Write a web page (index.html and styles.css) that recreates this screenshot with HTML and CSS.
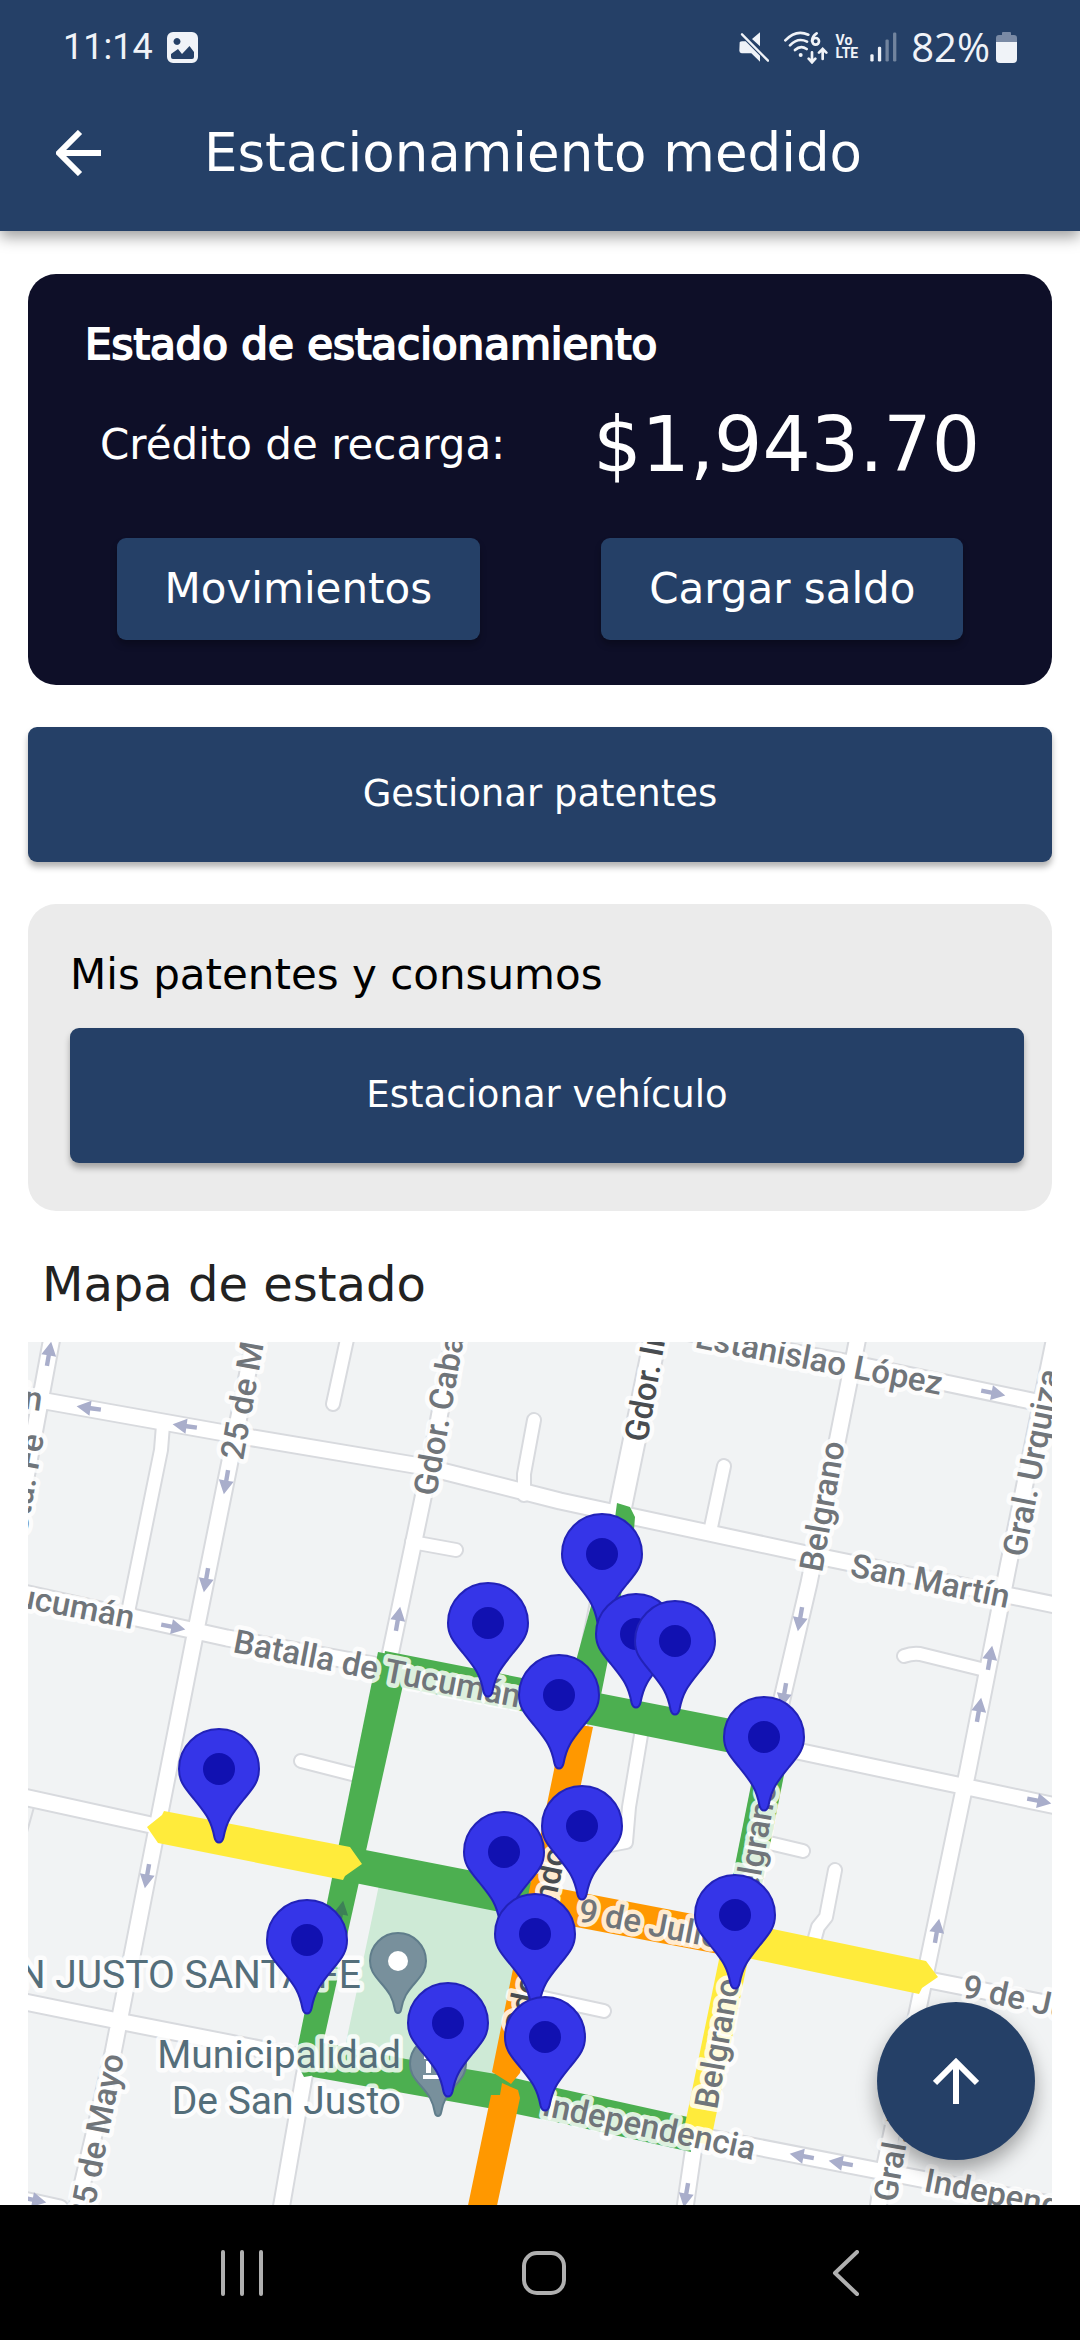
FILE: index.html
```html
<!DOCTYPE html>
<html lang="es">
<head>
<meta charset="utf-8">
<meta name="viewport" content="width=device-width, initial-scale=1">
<title>Estacionamiento medido</title>
<link rel="stylesheet" href="styles.css">
</head>
<body>
<header class="header">
  <div class="status">
    <span class="status-clock">11:14</span>
    <svg class="icon-photo" viewBox="0 0 31 31" width="31" height="31" aria-hidden="true"><path fill="#f0f3f8" fill-rule="evenodd" d="M6 0h19a6 6 0 0 1 6 6v19a6 6 0 0 1-6 6H6a6 6 0 0 1-6-6V6a6 6 0 0 1 6-6zM10 6a3.500 3.500 0 1 0 .01 0zM4 22v3q0 2 2 2h19q2 0 2-2v-5l-4.500-6-7.500 8-4-5z"/></svg>
    <div class="status-right">
      <svg class="icon-mute" viewBox="95 65 90 90" width="30" height="30" aria-hidden="true"><path fill="#f0f3f8" d="M134 86l24-20v42zM97 96q2-3 8-3h10l43 43v18l-26-25h-29q-7-1-7-8z"/><path d="M104 72l78 79" stroke="#f0f3f8" stroke-width="7" stroke-linecap="round"/></svg>
      <svg class="icon-wifi" viewBox="230 62 132 99" width="44" height="33" aria-hidden="true"><g fill="none" stroke="#f0f3f8" stroke-width="8" stroke-linecap="round"><path d="M234 90Q266 56 303 73M248 105Q272 80 299 94M263 119Q280 103 298 116"/><path d="M328 69q-14 9-14 23"/><circle cx="325" cy="93" r="10"/><path d="M314 126v28m-10-9l10 11 10-11M346 146v-28m-11 9l11-11 11 11"/></g><circle cx="280" cy="134" r="6" fill="#f0f3f8"/></svg>
      <span class="volte"><span>Vo</span><span>LTE</span></span>
      <svg class="icon-signal" viewBox="495 65 82 90" width="27" height="30" aria-hidden="true"><g fill="#f0f3f8"><rect x="496" y="132" width="10" height="22" rx="4"/><rect x="519" y="109" width="10" height="45" rx="4"/><g opacity=".38"><rect x="542" y="87" width="10" height="67" rx="4"/><rect x="565" y="66" width="10" height="88" rx="4"/></g></g></svg>
      <span class="status-charge">82%</span>
      <svg class="icon-battery" viewBox="0 0 21 32" width="21" height="32" aria-hidden="true"><path fill="#7a8aa5" d="M6 4V2q0-1 1-1h7q1 0 1 1v2h3q3 0 3 3v5H0V7q0-3 3-3z"/><path fill="#f0f3f8" d="M0 11h21v17q0 4-4 4H4q-4 0-4-4z"/></svg>
    </div>
  </div>
  <div class="toolbar">
    <button class="back" type="button" aria-label="Volver"><svg viewBox="0 0 46 46" width="46" height="46"><path d="M45 23H5M24 2L3 23l21 21" fill="none" stroke="#fff" stroke-width="6"/></svg></button>
    <h1 class="title">Estacionamiento medido</h1>
  </div>
</header>

<main class="main">
  <section class="balance">
    <h2 class="balance-title">Estado de estacionamiento</h2>
    <div class="balance-row">
      <span class="balance-label">Crédito de recarga:</span>
      <span class="balance-amount">$1,943.70</span>
    </div>
    <div class="balance-actions">
      <button class="btn-small" type="button">Movimientos</button>
      <button class="btn-small" type="button">Cargar saldo</button>
    </div>
  </section>

  <button class="btn-large" type="button">Gestionar patentes</button>

  <section class="panel">
    <h2 class="panel-title">Mis patentes y consumos</h2>
    <button class="btn-large" type="button">Estacionar vehículo</button>
  </section>

  <section class="map-section">
    <h2 class="map-title">Mapa de estado</h2>
    <div class="map">
      <svg class="map-canvas" viewBox="28 1342 1024 863" preserveAspectRatio="xMidYMin slice" role="img" aria-label="Mapa de estado">
        <defs>
          <path id="arrow" d="M0-12.500L7.500 1.500H2.200V12h-4.400V1.500h-5.300z"/>
          <g id="pin">
            <path d="M0 73.500c-2.500 0-3.800-2-4.500-5C-8 50-14 44-25 30-36 17-40 11-40 0a40 40 0 0 1 80 0c0 11-4 17-15 30C14 44 8 50 4.500 68.500c-.7 3-2 5-4.500 5z" fill="#3535e8" stroke="#2222b8" stroke-width="2"/>
            <circle r="16" fill="#1111b1"/>
          </g>
          <path id="poi" d="M0 52c-1.500 0-2.500-1-3-3C-5 37-9 31-17 22-25 13-28 8-28 0a28 28 0 0 1 56 0c0 8-3 13-11 22C9 31 5 37 3 49c-.5 2-1.500 3-3 3z" fill="#78909c" stroke="#607d8b" stroke-width="2"/>
          <g id="side-streets">
            <path d="M163 1425L161 1450 126 1622M349 1330L333 1404M534 1420L524 1474V1495M724 1466L710 1532M456 1550L412 1542M904 1656Q912 1653 920 1654L985 1670M301 1761L360 1776M641 1735L629 1807 626 1842 605 1846M803 1851L765 1842M835 1870L826 1917 818 1927 813 1945M604 2011L535 1996"/>
          </g>
          <g id="streets">
            <path d="M53 1332L40 1402 20 1510M34 1399L247 1437 426 1467 560 1501 802 1553 1070 1608M256 1332L196 1630 158 1823 113 2053 74 2220M455 1332L433 1450 388 1665 304 2077 280 2215M10 1590L227 1638 395 1669 802 1752 967 1787 1070 1809M10 1794L151 1825 400 1872 745 1941 929 1980 1070 2008M859 1332L809 1583 781 1703 693 2153 684 2215M1056 1332L1008 1567 968 1770 929 1957 884 2170 877 2215M680 1331L850 1363 1060 1407M10 1999L123 2022 306 2058 690 2134 1070 2208M10 2197L60 2208"/>
          </g>
        </defs>

        <rect x="0" y="1300" width="1100" height="950" fill="#f1f3f4"/>
        <path d="M380 1880L545 1915 506 2085 344 2052z" fill="#ceead6"/>

        <g fill="none" stroke="#d8dade" stroke-linecap="round" stroke-linejoin="round">
          <use href="#side-streets" stroke-width="16"/>
          <use href="#streets" stroke-width="19"/>
          <path d="M657 1330L622 1500 578 1720" stroke-width="25"/>
          <path d="M34 1807L27 1832" stroke-width="2"/>
        </g>
        <g fill="none" stroke="#fff" stroke-linecap="round" stroke-linejoin="round">
          <use href="#side-streets" stroke-width="12"/>
          <use href="#streets" stroke-width="15"/>
          <path d="M657 1330L622 1500 578 1720" stroke-width="21"/>
        </g>

        <g fill="#a9aecb">
          <use href="#arrow" transform="translate(49 1354) rotate(10)"/>
          <use href="#arrow" transform="translate(89 1408) rotate(-82)"/>
          <use href="#arrow" transform="translate(185 1426) rotate(-82)"/>
          <use href="#arrow" transform="translate(226 1482) rotate(190)"/>
          <use href="#arrow" transform="translate(206 1580) rotate(190)"/>
          <use href="#arrow" transform="translate(398 1619) rotate(10)"/>
          <use href="#arrow" transform="translate(173 1627) rotate(101)"/>
          <use href="#arrow" transform="translate(993 1393) rotate(101)"/>
          <use href="#arrow" transform="translate(800 1619) rotate(190)"/>
          <use href="#arrow" transform="translate(784 1695) rotate(190)"/>
          <use href="#arrow" transform="translate(990 1658) rotate(10)"/>
          <use href="#arrow" transform="translate(979 1710) rotate(10)"/>
          <use href="#arrow" transform="translate(1039 1801) rotate(101)"/>
          <use href="#arrow" transform="translate(937 1931) rotate(10)"/>
          <use href="#arrow" transform="translate(802 2156) rotate(-80)"/>
          <use href="#arrow" transform="translate(841 2163) rotate(-80)"/>
          <use href="#arrow" transform="translate(686 2195) rotate(190)"/>
          <use href="#arrow" transform="translate(147 1876) rotate(190)"/>
          <use href="#arrow" transform="translate(34 2200) rotate(101)"/>
        </g>

        <g fill="#4caf50">
          <path d="M617 1503l13 4 5 10-1 13-34 170-32-10 47-172z"/>
          <path d="M385 1651L726 1718 770 1727 766 1760 726 1752 380 1683z"/>
          <path d="M378 1652L409 1658 316 2075 304 2077 295 2060z"/>
          <path d="M350 1847L545 1885 545 1921 350 1882z"/>
          <path d="M760 1740H791L753 1930H722z"/>
          <path d="M320 2042L406 2059 502 2075 557 2088 688 2117 691 2152 560 2123 488 2108 313 2077 298 2058z"/>
        </g>
        <use href="#arrow" transform="translate(341 1913) rotate(10)" fill="#3d8057"/>
        <g fill="#ff9800">
          <path d="M562 1722L593 1727 584 1770 520 2073 511 2084 492 2072 506 2003 554 1770z"/>
          <path d="M502 2083L518 2090 520 2098 495 2215H466L491 2095 500 2095z"/>
          <path d="M540 1885L562 1889 745 1924 745 1959 576 1927 540 1920z"/>
        </g>
        <g fill="#ffeb3b">
          <path d="M147 1827L162 1815 164 1811 350 1847 362 1864 345 1876 343 1880 158 1843z"/>
          <path d="M730 1920L926 1961 938 1977 922 1988 919 1994 728 1954z"/>
          <path d="M722 1945H751L710 2145 682 2139z"/>
        </g>

        <use href="#poi" x="398" y="1961"/>
        <circle cx="398" cy="1961" r="10" fill="#fff"/>
        <use href="#poi" x="438" y="2064"/>
        <path d="M438 2048l14 7v4h-28v-4zM426 2061h5v12h-5zM436 2061h5v12h-5zM446 2061h5v12h-5zM423 2075h30v4h-30z" fill="#fff"/>

        <g class="street-name">
          <text transform="translate(849 1576) rotate(11.500)">San Martín</text>
          <text text-anchor="end" transform="translate(940 1395) rotate(11)">Estanislao López</text>
          <text transform="translate(232 1652) rotate(11)">Batalla de Tucumán</text>
          <text text-anchor="end" transform="translate(132 1629) rotate(11)">Tucumán</text>
          <text transform="translate(243 1461) rotate(-80)">25 de Mayo</text>
          <text transform="translate(436 1497) rotate(-80)">Gdor. Caballero</text>
          <text transform="translate(822 1573) rotate(-80)">Belgrano</text>
          <text transform="translate(1025 1558) rotate(-79)">Gral. Urquiza</text>
          <text text-anchor="end" transform="translate(44 1436) rotate(-80)">Sta. Fe</text>
          <text text-anchor="end" transform="translate(41 1411) rotate(8)">Martín</text>
          <text transform="translate(577 1921) rotate(11)">9 de Julio</text>
          <text transform="translate(961 1997) rotate(12)">9 de Julio</text>
          <text transform="translate(717 2110) rotate(-80)">Belgrano</text>
          <text transform="translate(754 1915) rotate(-80)">Belgrano</text>
          <text transform="translate(896 2203) rotate(-80)">Gral. Urquiza</text>
          <text transform="translate(541 2115) rotate(12)">Independencia</text>
          <text transform="translate(923 2191) rotate(11)">Independencia</text>
          <text text-anchor="end" transform="translate(124 2056) rotate(-79)">25 de Mayo</text>
          <text class="avenue" transform="translate(647 1443) rotate(-80)">Gdor. Iriondo</text>
          <text class="avenue" transform="translate(527 2036) rotate(-78)">Gdor. Iriondo</text>
        </g>
        <g class="place-name" text-anchor="end">
          <text x="361" y="1988">SAN JUSTO SANTA FE</text>
          <text x="401" y="2068">Municipalidad</text>
          <text x="401" y="2114">De San Justo</text>
        </g>

        <use href="#pin" x="602" y="1554"/>
        <use href="#pin" x="488" y="1623"/>
        <use href="#pin" x="636" y="1634"/>
        <use href="#pin" x="675" y="1641"/>
        <use href="#pin" x="559" y="1695"/>
        <use href="#pin" x="764" y="1737"/>
        <use href="#pin" x="219" y="1769"/>
        <use href="#pin" x="582" y="1826"/>
        <use href="#pin" x="504" y="1852"/>
        <use href="#pin" x="735" y="1915"/>
        <use href="#pin" x="535" y="1934"/>
        <use href="#pin" x="307" y="1940"/>
        <use href="#pin" x="448" y="2023"/>
        <use href="#pin" x="545" y="2037"/>
      </svg>
      <button class="fab" type="button" aria-label="Subir"><svg viewBox="0 0 46 46" width="46" height="46"><path d="M23 46V5M2 25L23 4l21 21" fill="none" stroke="#fff" stroke-width="6"/></svg></button>
    </div>
  </section>
</main>

<nav class="nav">
  <button class="nav-btn" type="button" aria-label="Recientes"><svg viewBox="0 0 44 46" width="44" height="46"><path d="M3 2v42M22 2v42M41 2v42" stroke="#b0b0b0" stroke-width="4" stroke-linecap="round"/></svg></button>
  <button class="nav-btn" type="button" aria-label="Inicio"><svg viewBox="0 0 46 46" width="46" height="46"><rect x="3" y="3" width="40" height="40" rx="13" fill="none" stroke="#b0b0b0" stroke-width="4"/></svg></button>
  <button class="nav-btn" type="button" aria-label="Atrás"><svg viewBox="0 0 30 46" width="30" height="46"><path d="M26 2L4 23l22 21" fill="none" stroke="#b0b0b0" stroke-width="4" stroke-linecap="round" stroke-linejoin="round"/></svg></button>
</nav>
</body>
</html>
```
FILE: styles.css
```css
* {
  box-sizing: border-box;
}

body {
  margin: 0;
  min-height: 100vh;
  display: flex;
  flex-direction: column;
  background: #fff;
  font-family: "DejaVu Sans", sans-serif;
}

h1,
h2 {
  margin: 0;
  font-weight: 400;
}

button {
  margin: 0;
  padding: 0;
  border: 0;
  font-family: inherit;
  color: #fff;
  cursor: pointer;
}

svg {
  display: block;
  flex: none;
}

.header {
  position: relative;
  padding-bottom: 19px;
  background: #254067;
  color: #fff;
  box-shadow: 0 6px 14px rgba(0, 0, 0, 0.38);
}

.status {
  display: flex;
  align-items: center;
  height: 94px;
  padding: 0 63px;
  color: #f0f3f8;
  font-family: Roboto, sans-serif;
}

.status-clock {
  font-size: 36px;
  line-height: 48px;
}

.status-charge {
  font-family: "Open Sans", sans-serif;
  font-size: 40px;
  line-height: 48px;
}

.icon-photo {
  margin-left: 14px;
}

.status-right {
  display: flex;
  align-items: center;
  margin-left: auto;
}

.icon-wifi {
  margin-left: 15px;
}

.volte {
  display: flex;
  flex-direction: column;
  margin-left: 8px;
  font-size: 14px;
  font-weight: 700;
  line-height: 13px;
}

.icon-signal {
  margin: 0 14px 0 12px;
}

.icon-battery {
  margin-left: 6px;
}

.toolbar {
  display: flex;
  align-items: center;
  height: 118px;
  padding-left: 56px;
}

.back {
  background: none;
}

.title {
  margin-left: 102px;
  font-size: 53px;
  line-height: 64px;
}

.main {
  flex: 1;
  display: flex;
  flex-direction: column;
  gap: 42px;
  padding: 43px 28px 0;
}

.balance {
  padding: 46px 28px 45px;
  border-radius: 28px;
  background: #0e0f28;
  color: #fff;
}

.balance-title {
  padding-left: 29px;
  font-size: 42px;
  line-height: 50px;
  -webkit-text-stroke: 2px #fff;
}

.balance-row,
.balance-actions {
  display: flex;
  align-items: center;
  justify-content: space-around;
}

.balance-row {
  margin-top: 31px;
}

.balance-label {
  font-size: 42px;
  line-height: 50px;
}

.balance-amount {
  font-size: 76px;
  line-height: 88px;
}

.balance-actions {
  margin-top: 49px;
}

.btn-small {
  padding: 26px 48px;
  border-radius: 9px;
  background: #254067;
  font-size: 42px;
  line-height: 50px;
  box-shadow: 0 5px 6px rgba(0, 0, 0, 0.25);
}

.btn-large {
  width: 100%;
  padding: 43px 20px 44px;
  border-radius: 9px;
  background: #254067;
  font-size: 37px;
  line-height: 48px;
  box-shadow: 0 5px 6px rgba(0, 0, 0, 0.3);
}

.panel {
  display: flex;
  flex-direction: column;
  gap: 28px;
  padding: 46px 28px 48px 42px;
  border-radius: 28px;
  background: #ebebeb;
}

.panel-title {
  color: #000;
  font-size: 42px;
  line-height: 50px;
}

.map-section {
  flex: 1;
  display: flex;
  flex-direction: column;
  gap: 30px;
}

.map-title {
  padding: 3px 14px 0;
  color: #222;
  font-size: 48px;
  line-height: 56px;
}

.map {
  position: relative;
  flex: 1;
  overflow: hidden;
}

.map-canvas {
  width: 100%;
  height: 100%;
}

.street-name,
.place-name {
  font-family: Roboto, sans-serif;
  stroke: rgba(255, 255, 255, 0.82);
  stroke-width: 9px;
  stroke-linejoin: round;
  paint-order: stroke;
}

.street-name {
  fill: #70757a;
  font-size: 33px;
  font-weight: 500;
}

.avenue {
  fill: #484c50;
}

.place-name {
  fill: #546e7a;
  font-size: 39px;
}

.fab {
  position: absolute;
  right: 17px;
  bottom: 45px;
  display: flex;
  align-items: center;
  justify-content: center;
  width: 158px;
  height: 158px;
  border-radius: 50%;
  background: #254067;
  box-shadow: 0 10px 20px rgba(0, 0, 0, 0.35);
}

.nav {
  display: grid;
  grid-template-columns: repeat(3, 1fr);
  height: 135px;
  padding: 0 83px 0 91px;
  background: #000;
}

.nav-btn {
  display: flex;
  align-items: center;
  justify-content: center;
  background: none;
}
```
